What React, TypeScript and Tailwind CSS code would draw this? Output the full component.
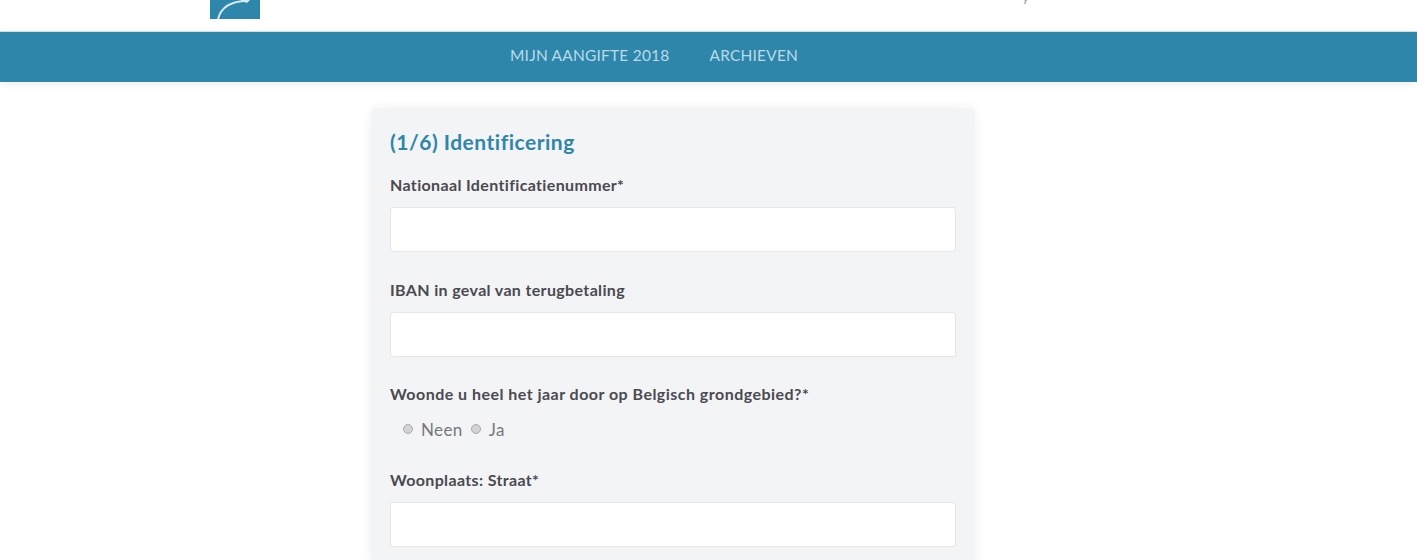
const FONT = "font-['Lato','Open_Sans',sans-serif]";

function Field({ label }: { label: string }) {
  return (
    <div className="mb-[27.5px]">
      <label className="block h-[20px] mb-[12px] text-[16px] leading-[20px] font-bold text-[#4a4a50] tracking-[0.35px]">{label}</label>
      <div className="h-[45px] bg-white border border-[#e6e6e6] rounded-[3px]" />
    </div>
  );
}

function Radio({ label }: { label: string }) {
  return (
    <span className="inline-flex items-center mr-[8px]">
      <span className="w-[10px] h-[10px] mr-[8px] -mt-[3px] rounded-full bg-[#d2d2d4] border border-[#a9a9ad]" />
      <span className="text-[17px] leading-[20px] text-[#77777d] tracking-[0.4px]">{label}</span>
    </span>
  );
}

export default function App() {
  return (
    <div className={`h-[560px] overflow-hidden bg-white ${FONT}`}>
      {/* Top bar, page is scrolled so the logo is cut off */}
      <header className="h-[32px] overflow-hidden relative border-b border-[#d5dde2]">
        <div className="ml-[210px] w-[50px] h-[19px] bg-[#2e86ab] overflow-hidden">
          <svg width="50" height="19" viewBox="0 0 50 19" fill="none">
            <path d="M8 19C11 8 20 1 37 1" stroke="#d5eaf2" strokeWidth="2" />
            <path d="M30 0H40L37 3Z" fill="#d5eaf2" />
          </svg>
        </div>
        <span className="absolute left-[1022px] -top-[13px] text-[14px] leading-[20px] text-[#9a9a9a]">y</span>
      </header>

      <nav className="h-[50px] pb-[2px] bg-[#2e86ab] shadow-[0_2px_8px_rgba(0,0,0,0.08)] flex items-center pl-[510px] gap-[40px] text-[15.5px] tracking-[0.2px] text-[#b9dbe7]">
        <a>MIJN AANGIFTE 2018</a>
        <a>ARCHIEVEN</a>
      </nav>

      <main className="w-[604px] h-[460px] ml-[371px] mt-[26px] px-[19px] pt-[21px] bg-[#f3f4f6] rounded-t-[5px] shadow-[0_0_12px_rgba(0,0,0,0.06)]">
        <h2 className="h-[26px] mb-[20px] text-[21px] leading-[26px] font-bold text-[#2e86ab] tracking-[0.5px]">(1/6) Identificering</h2>
        <Field label="Nationaal Identificatienummer*" />
        <Field label="IBAN in geval van terugbetaling" />
        <div className="mb-[30px]">
          <label className="block h-[20px] mb-[16px] text-[16px] leading-[20px] font-bold text-[#4a4a50] tracking-[0.47px]">Woonde u heel het jaar door op Belgisch grondgebied?*</label>
          <div className="pl-[13px] h-[20px] flex items-center">
            <Radio label="Neen" />
            <Radio label="Ja" />
          </div>
        </div>
        <Field label="Woonplaats: Straat*" />
      </main>
    </div>
  );
}
